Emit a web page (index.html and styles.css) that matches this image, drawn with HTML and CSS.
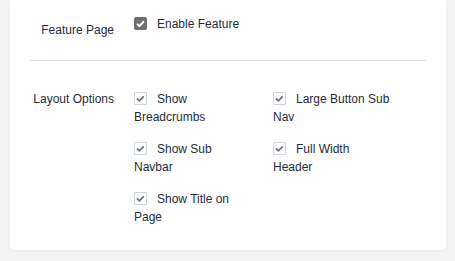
FILE: index.html
```html
<!DOCTYPE html>
<html>
<head lang="en">
    <meta charset="UTF-8">
    <title>Settings</title>
    <link rel="stylesheet" href="styles.css">
</head>
<body>
<div class="card">
    <div class="form-row first-row">
        <div class="form-label feature-label">Feature Page</div>
        <div class="form-field">
            <label class="check-item"><span class="check check-on"><svg width="13" height="13" viewBox="0 0 13 13"><path d="M3 6.8 L5.4 9.1 L10 4.2" fill="none" stroke="#fff" stroke-width="2"/></svg></span>Enable Feature</label>
        </div>
    </div>
    <div class="form-row">
        <div class="form-label">Layout Options</div>
        <div class="form-field option-grid">
            <label class="check-item"><span class="check"><svg width="11" height="11" viewBox="0 0 11 11"><path d="M2 5.5 L4.4 7.8 L8.8 3.3" fill="none" stroke="#6b7482" stroke-width="1.8"/></svg></span>Show Breadcrumbs</label>
            <label class="check-item"><span class="check"><svg width="11" height="11" viewBox="0 0 11 11"><path d="M2 5.5 L4.4 7.8 L8.8 3.3" fill="none" stroke="#6b7482" stroke-width="1.8"/></svg></span>Large Button Sub Nav</label>
            <label class="check-item"><span class="check"><svg width="11" height="11" viewBox="0 0 11 11"><path d="M2 5.5 L4.4 7.8 L8.8 3.3" fill="none" stroke="#6b7482" stroke-width="1.8"/></svg></span>Show Sub Navbar</label>
            <label class="check-item"><span class="check"><svg width="11" height="11" viewBox="0 0 11 11"><path d="M2 5.5 L4.4 7.8 L8.8 3.3" fill="none" stroke="#6b7482" stroke-width="1.8"/></svg></span>Full Width Header</label>
            <label class="check-item"><span class="check"><svg width="11" height="11" viewBox="0 0 11 11"><path d="M2 5.5 L4.4 7.8 L8.8 3.3" fill="none" stroke="#6b7482" stroke-width="1.8"/></svg></span>Show Title on Page</label>
        </div>
    </div>
</div>
</body>
</html>
```
FILE: styles.css
```css
html, body {
    margin: 0px;
    padding: 0px;
}
body {
    background: #f3f3f3;
    padding: 0px 9px 11px 10px;
    font-family: "Liberation Sans", Arial, sans-serif;
    font-size: 12px;
    line-height: 18px;
    color: #1f2c3b;
}
.card {
    background: #ffffff;
    border-radius: 0px 0px 4px 4px;
    box-shadow: 0px 1px 4px rgba(0, 0, 0, 0.05);
    padding: 15px 20px 24px 20px;
}
.form-row {
    display: flex;
    padding-top: 29px;
}
.first-row {
    padding-top: 0px;
    padding-bottom: 21px;
    border-bottom: #dcdfe6 solid 1px;
}
.form-label {
    width: 84px;
    flex-shrink: 0;
    padding-right: 20px;
    text-align: right;
}
.feature-label {
    padding-top: 6px;
}
.option-grid {
    display: grid;
    grid-template-columns: 117px 117px;
    column-gap: 22px;
    row-gap: 14px;
}
.check-item {
    display: block;
}
.check {
    display: inline-block;
    box-sizing: border-box;
    width: 13px;
    height: 13px;
    margin-right: 10px;
    vertical-align: -2px;
    border: #cfd3da solid 1px;
    border-radius: 1px;
    background: #ffffff;
}
.check svg {
    display: block;
}
.check-on {
    border: none;
    border-radius: 2px;
    background: #6f6f6f;
}
```
